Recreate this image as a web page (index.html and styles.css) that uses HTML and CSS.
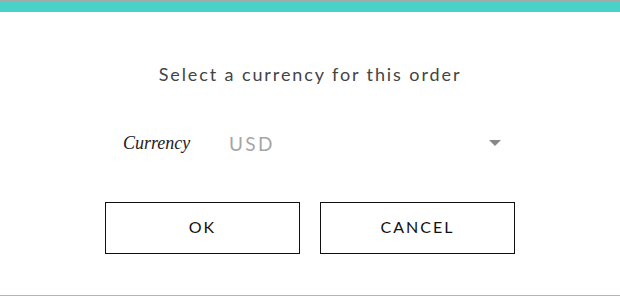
FILE: index.html
```html
<!DOCTYPE html>
<html>
<head>
<meta charset="utf-8">
<link rel="stylesheet" href="styles.css">
</head>
<body>
<div class="dialog">
  <div class="topbar"></div>
  <h1 class="title">Select a currency for this order</h1>
  <div class="field">
    <span class="label">Currency</span>
    <div class="select">
      <span class="value">USD</span>
      <svg class="caret" width="12" height="6" viewBox="0 0 12 6"><path d="M0 0H12L6 6Z" fill="#888"/></svg>
    </div>
  </div>
  <div class="actions">
    <button class="btn">OK</button>
    <button class="btn">CANCEL</button>
  </div>
</div>
</body>
</html>
```
FILE: styles.css
```css
html, body {
  margin: 0;
  padding: 0;
  background: #fff;
}
.dialog {
  width: 620px;
  height: 296px;
  box-sizing: border-box;
  border-bottom: 1px solid #b4b4b4;
  display: flex;
  flex-direction: column;
  align-items: center;
}
.topbar {
  align-self: stretch;
  height: 11px;
  border-top: 1px solid #a9a9a9;
  background: #4ad1c8;
}
.title {
  margin: 52px 0 0;
  font-family: Lato, sans-serif;
  font-weight: 400;
  font-size: 18px;
  line-height: 20px;
  letter-spacing: 1.9px;
  color: #444;
}
.field {
  margin-top: 47px;
  margin-left: 10px;
  width: 384px;
  display: flex;
  align-items: center;
  height: 24px;
}
.label {
  width: 106px;
  font-family: "Liberation Serif", serif;
  font-style: italic;
  font-size: 18px;
  color: #222;
}
.select {
  flex: 1;
  display: flex;
  align-items: center;
  justify-content: space-between;
}
.value {
  font-family: Lato, sans-serif;
  font-size: 19px;
  letter-spacing: 2.4px;
  color: #a6a6a6;
}
.caret {
  margin-right: 6px;
}
.actions {
  margin-top: 47px;
  display: flex;
  gap: 20px;
}
.btn {
  width: 195px;
  height: 52px;
  background: #fff;
  border: 1px solid #111;
  border-radius: 0;
  font-family: Lato, sans-serif;
  font-size: 16px;
  letter-spacing: 2px;
  color: #111;
  padding: 0 0 4px;
}
```
